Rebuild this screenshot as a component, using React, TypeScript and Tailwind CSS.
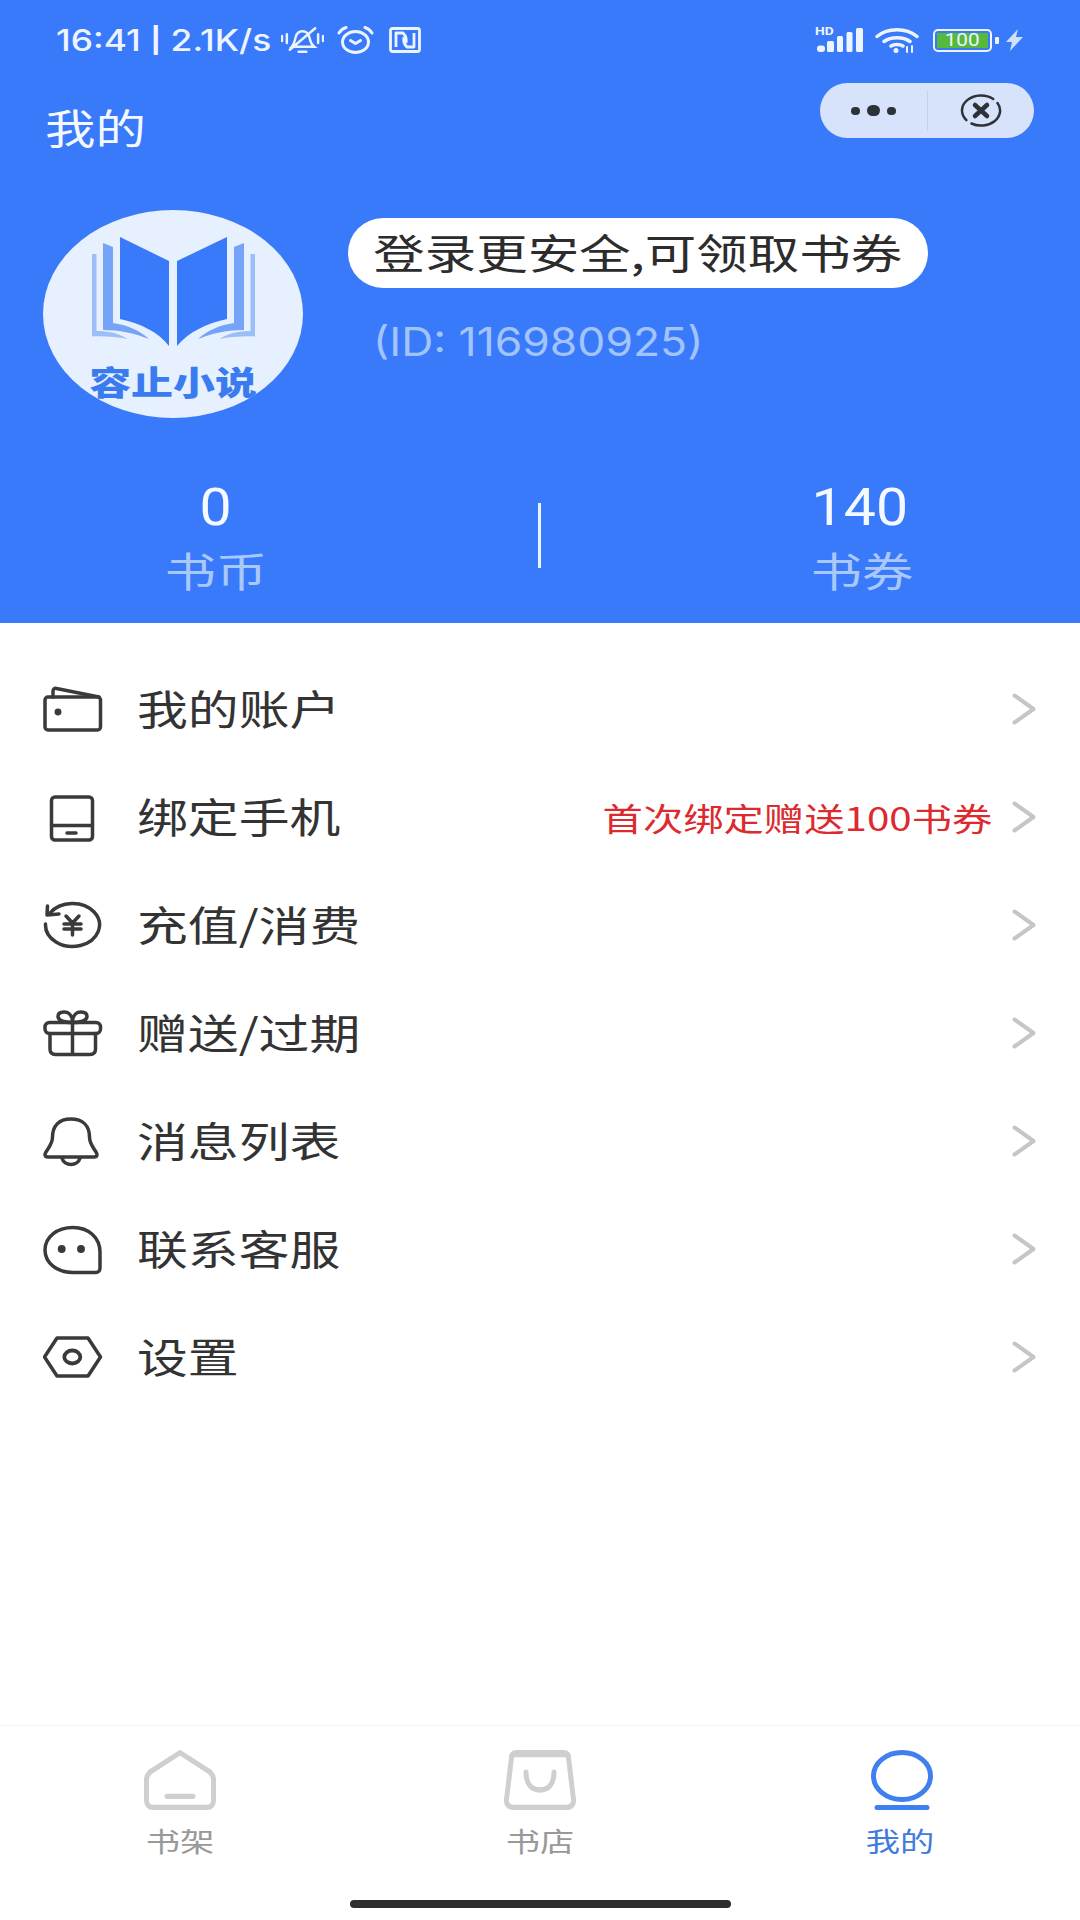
import React from "react";

const CJK = { fontFamily: '"Noto Sans CJK SC","Noto Sans",sans-serif' };
const LAT = { fontFamily: 'Roboto,"Noto Sans CJK SC",sans-serif' };
const INT = { fontFamily: 'Inter,"Noto Sans CJK SC",sans-serif' };

function Svg({ children }: { children: React.ReactNode }) {
  return (
    <svg viewBox="0 0 60 60" className="w-[60px] h-[60px]" fill="none" stroke="#3a3a3a" strokeWidth="3.5" strokeLinecap="round" strokeLinejoin="round">
      {children}
    </svg>
  );
}

const WalletIcon = () => (
  <Svg>
    <rect x="2" y="18" width="55.500" height="33" rx="3" />
    <path d="M10 18v-6c0-2 1.500-3 3.500-2.500L56 18" />
    <circle cx="15" cy="33" r="1.700" fill="#3a3a3a" />
  </Svg>
);
const TabletIcon = () => (
  <Svg>
    <rect x="8.500" y="10" width="41" height="43" rx="3.500" />
    <path d="M8.500 38.500h41M24 46h9" />
  </Svg>
);
const RechargeIcon = () => (
  <Svg>
    <path d="M2.500 29A27 21.500 0 1 0 7 18" />
    <path d="M4.500 11L4 20l12-1" />
    <path d="M23 21l6.500 7 6.500-7M21 29h17M21 34h17M29.500 28v12" strokeWidth="3.500" />
  </Svg>
);
const GiftIcon = () => (
  <Svg>
    <rect x="2" y="19.500" width="55.500" height="11" rx="4.500" />
    <path d="M7 30.500V46c0 3.500 2 5.500 5.500 5.500h34.500c3.500 0 5.500-2 5.500-5.500V30.500M29.500 19.500v32" />
    <path d="M29.500 19.500c-4 0-14 0-14.500-6 0-3 2.500-4.500 6-4.500 5 0 8.500 4 8.500 10.500 0-6.500 3.500-10.500 8.500-10.500 3.500 0 6 1.500 6 4.500-.5 6-10.500 6-14.500 6z" />
  </Svg>
);
const BellIcon = () => (
  <Svg>
    <path d="M27.700 8C16 8 9.500 15 9.500 26c0 9-7.500 14-7.500 17.500C2 45.500 3 46 5 46h46c2 0 3-.5 3-2.500C54 40 46.500 35 46.500 26c0-11-6.500-18-18.800-18z" />
    <path d="M19 47c1 4 5 6.500 9 6.500s8-2.500 9-6.500" />
  </Svg>
);
const ChatIcon = () => (
  <Svg>
    <path d="M2 31C2 18 14 8.500 30 8.500 46 8.500 57 19 57 33v16c0 3-2 4.500-4 4.500H30C14 53.500 2 44 2 31z" />
    <circle cx="18.700" cy="30" r="2.200" fill="#3a3a3a" />
    <circle cx="38" cy="30" r="2.200" fill="#3a3a3a" />
  </Svg>
);
const HexIcon = () => (
  <Svg>
    <path d="M14 11h31l12.500 19L45 49H14L1.500 30z" />
    <ellipse cx="29.300" cy="30" rx="8" ry="6.500" strokeWidth="3.800" />
  </Svg>
);

const Chevron = () => (
  <svg viewBox="0 0 24 32" className="w-[24px] h-[32px] ml-[20px] shrink-0" fill="none" stroke="#c6c6c6" strokeWidth="4" strokeLinecap="round" strokeLinejoin="round">
    <path d="M2.500 2.500L21.500 16 2.500 29.500" />
  </svg>
);

const rows: { label: string; Icon: () => React.ReactElement; note?: string }[] = [
  { label: "我的账户", Icon: WalletIcon },
  { label: "绑定手机", Icon: TabletIcon, note: "首次绑定赠送100书券" },
  { label: "充值/消费", Icon: RechargeIcon },
  { label: "赠送/过期", Icon: GiftIcon },
  { label: "消息列表", Icon: BellIcon },
  { label: "联系客服", Icon: ChatIcon },
  { label: "设置", Icon: HexIcon },
];

function StatusBar() {
  return (
    <div className="h-[78px] pt-[20px] pl-[56px] pr-[57px] flex items-start justify-between text-[#eef4ff]">
      <div className="flex items-center h-[40px]">
        <div className="w-[224px]">
          <span className="inline-block origin-left scale-x-[1.18] text-[30px] font-medium whitespace-nowrap" style={INT}>
            16:41 <span className="text-[25px] font-bold align-[2px]">|</span> 2.1K/s
          </span>
        </div>
        <svg viewBox="0 0 44 28" className="w-[43px] h-[28px] ml-[1px]" fill="none" stroke="#eef4ff" strokeWidth="2.500" strokeLinecap="round">
          <path d="M11 21c3-3 3-7 4-10 1-4 4-6 7-6s6 2 7 6c1 3 1 7 5 10zM18 26h8M38 8v9M43 10v5M6 8v9M1 10v5M9 24L35 2" />
        </svg>
        <svg viewBox="0 0 37 28" className="w-[37px] h-[28px] ml-[13px]" fill="none" stroke="#eef4ff" strokeWidth="3" strokeLinecap="round" strokeLinejoin="round">
          <ellipse cx="18.500" cy="16" rx="13" ry="10.500" />
          <path d="M13.500 14.500l5 3 5-3M2 7c2-3 4-4.500 7-5.500M35 7c-2-3-4-4.500-7-5.500" />
        </svg>
        <svg viewBox="0 0 32 26" className="w-[32px] h-[26px] ml-[15px]" fill="none" stroke="#eef4ff" strokeWidth="2.800" strokeLinejoin="round">
          <rect x="1.500" y="1.500" width="29" height="23" rx="2" />
          <path d="M7 20V6h7c3 3 4 6 3 10M25 6v14h-7c-3-3-4-6-3-10" />
        </svg>
      </div>
      <div className="flex items-center h-[40px]">
        <div className="relative w-[46px] h-[24px]">
          <span className="absolute left-[-2px] top-[-2px] text-[11px] font-bold leading-[12px] inline-block origin-left scale-x-[1.25]" style={LAT}>HD</span>
          <svg viewBox="0 0 46 24" className="w-[46px] h-[24px]" fill="#eef4ff">
            <rect x="0" y="17.500" width="8" height="6.500" rx="3" />
            <rect x="10" y="13" width="7" height="11" rx="1.500" />
            <rect x="20" y="8" width="6" height="16" rx="1.500" />
            <rect x="29.500" y="4" width="6" height="20" rx="1.500" />
            <rect x="39" y="0" width="7" height="24" rx="1.500" />
          </svg>
        </div>
        <svg viewBox="0 0 44 25" className="w-[44px] h-[25px] ml-[12px]" fill="none" stroke="#eef4ff" strokeWidth="3.500" strokeLinecap="round">
          <path d="M2 8.500C13 -.5 31 -.5 42 8.500M9 13.500c7-5 19-5 26 0M16 18c3-2 9-2 12 0" />
          <circle cx="21" cy="22.500" r="2.500" fill="#eef4ff" stroke="none" />
          <path d="M32 19v5M37 18v6" strokeWidth="2" />
        </svg>
        <div className="ml-[14px] w-[59px] h-[23px] rounded-[5px] border-[2px] border-[#eef4ff] p-[2px] flex">
          <div className="flex-1 bg-[#56b93e] rounded-[1px] flex items-center justify-center text-[18px] leading-none text-[#eef4ff]" style={LAT}>
            <span className="inline-block scale-x-[1.15]">100</span>
          </div>
        </div>
        <div className="ml-[3px] w-[4px] h-[7px] bg-[#eef4ff] rounded-[1px]" />
        <svg viewBox="0 0 17 22" className="w-[17px] h-[22px] ml-[7px]" fill="#cfe0fb">
          <path d="M12 0L0 13h6L4 22 17 8h-7z" />
        </svg>
      </div>
    </div>
  );
}

function Avatar() {
  return (
    <div className="relative w-[260px] h-[208px] rounded-[50%] bg-[#e6f0fe] shrink-0 overflow-hidden">
      <svg viewBox="0 0 260 208" className="absolute inset-0 w-full h-full">
        <path d="M49 44h4.500v77c11 0 22 2 31 8-10-2-23-3-35.500-2.500z" fill="#9cbef8" />
        <path d="M212 44h-4.500v77c-11 0-22 2-31 8 10-2 23-3 35.500-2.500z" fill="#9cbef8" />
        <path d="M60 33l10 4v76c14 2 26 7 36 16-15-6-30-9-46-9z" fill="#75a3f7" />
        <path d="M201 33l-10 4v76c-14 2-26 7-36 16 15-6 30-9 46-9z" fill="#75a3f7" />
        <path d="M77 27l49 24v85c-11-14-27-22-49-27z" fill="#397afb" />
        <path d="M184 27l-50 24v85c12-14 28-22 50-27z" fill="#397afb" />
      </svg>
      <div className="absolute left-0 right-0 top-[149px] text-center leading-[44px]" style={CJK}>
        <span className="inline-block scale-x-[1.27] text-[33px] font-black text-[#3a7bf0] whitespace-nowrap">容止小说</span>
      </div>
    </div>
  );
}

function Stat({ value, label, offset }: { value: string; label: string; offset: string }) {
  return (
    <>
      <div className={`flex justify-center leading-[60px] ${offset}`} style={LAT}>
        <span className="block scale-x-[1.1] text-[52px] text-[#f4f8ff]">{value}</span>
      </div>
      <div className="flex justify-center mt-[1px] leading-[60px]" style={CJK}>
        <span className="block scale-x-[1.25] text-[41px] text-[#a9c8fb]">{label}</span>
      </div>
    </>
  );
}

function Header() {
  return (
    <header className="h-[623px] bg-[#397afb] flex flex-col">
      <StatusBar />
      <div className="relative h-[132px] pl-[45px]">
        <div className="pt-[22px] text-[41px] leading-[52px] text-[#f4f8ff] inline-block origin-left scale-x-[1.23]" style={CJK}>我的</div>
        <div className="absolute left-[820px] top-[5px] w-[214px] h-[55px] rounded-full bg-[#d6e3fb] flex items-center">
          <div className="w-[107px] flex items-center justify-center gap-[7px]">
            <span className="w-[9px] h-[8px] rounded-full bg-[#2d3138]" />
            <span className="w-[13px] h-[11px] rounded-full bg-[#2d3138]" />
            <span className="w-[9px] h-[8px] rounded-full bg-[#2d3138]" />
          </div>
          <div className="w-px h-[40px] bg-[#c3d0e6]" />
          <div className="flex-1 flex justify-center">
            <svg viewBox="0 0 42 33" className="w-[42px] h-[33px]" fill="none" stroke="#2d3138" strokeLinecap="round">
              <path d="M6.400 26.100A19 15 0 0 1 33.200 5M37.500 9A19 15 0 0 1 11.500 29.500" strokeWidth="2.500" />
              <path d="M15 11l12 11M27 11L15 22" strokeWidth="4.500" />
            </svg>
          </div>
        </div>
      </div>
      <div className="flex pl-[43px]">
        <Avatar />
        <div className="ml-[45px] pt-[8px]">
          <div className="w-[580px] h-[70px] pb-[2px] rounded-full bg-white flex items-center justify-center" style={CJK}>
            <span className="inline-block scale-x-[1.255] text-[41px] text-[#2c2c2c] whitespace-nowrap">登录更安全,可领取书券</span>
          </div>
          <div className="mt-[30px] ml-[25px] text-[39px] leading-[48px] text-[#a2c4fb] inline-block origin-left scale-x-[1.14] whitespace-nowrap" style={INT}>(ID: 116980925)</div>
        </div>
      </div>
      <div className="mt-[60px] flex items-start">
        <div className="w-[432px] text-center">
          <Stat value="0" label="书币" offset="" />
        </div>
        <div className="ml-[106px] mt-[25px] w-[3px] h-[65px] bg-[#eef4ff]" />
        <div className="w-[539px] pl-[103px] text-center">
          <Stat value="140" label="书券" offset="pr-[4px]" />
        </div>
      </div>
    </header>
  );
}

function Row({ label, Icon, note }: { label: string; Icon: () => React.ReactElement; note?: string }) {
  return (
    <div className="h-[108px] flex items-center pl-[43px] pr-[44px]">
      <div className="w-[60px] h-[60px] shrink-0"><Icon /></div>
      <div className="ml-[34px] pb-[2px] text-[41px] text-[#333] whitespace-nowrap inline-block origin-left scale-x-[1.24]" style={CJK}>{label}</div>
      <div className="flex-1" />
      {note && <div className="text-[32px] text-[#dc2a2e] whitespace-nowrap inline-block origin-right scale-x-[1.26]" style={CJK}>{note}</div>}
      <Chevron />
    </div>
  );
}

function TabLabel({ text, color }: { text: string; color: string }) {
  return (
    <div className="mt-[12px] leading-[38px]" style={CJK}>
      <span className={`inline-block scale-x-[1.27] text-[27px] ${color}`}>{text}</span>
    </div>
  );
}

function TabBar() {
  return (
    <div className="absolute left-0 right-0 bottom-0 h-[195px] border-t border-[#f5f5f5] bg-white">
      <div className="flex h-[147px]">
        <div className="w-[360px] flex flex-col items-center pt-[24px]">
          <svg viewBox="0 0 72 57" preserveAspectRatio="none" className="w-[72px] h-[60px]" fill="none" stroke="#cfcfcf" strokeWidth="5" strokeLinejoin="round" strokeLinecap="round">
            <path d="M36 2.500l30 18.500c2 2 3.500 4 3.500 7v20c0 4-2.500 6.500-6.500 6.500H9c-4 0-6.500-2.500-6.500-6.500V28c0-3 1.500-5 3.500-7z" />
            <path d="M23 44h26" strokeWidth="5" />
          </svg>
          <TabLabel text="书架" color="text-[#999999]" />
        </div>
        <div className="w-[360px] flex flex-col items-center pt-[24px]">
          <svg viewBox="0 0 72 57" preserveAspectRatio="none" className="w-[72px] h-[60px]" fill="none" stroke="#cfcfcf" strokeWidth="5" strokeLinejoin="round" strokeLinecap="round">
            <path d="M12 2.500h48c3 0 4.500 2 4.500 4.500l5 40c.5 4-2 7.500-6.500 7.500H9c-4.500 0-7-3.500-6.500-7.500l5-40c0-2.500 1.500-4.500 4.500-4.500z" />
            <path d="M10 5h52" strokeWidth="4" />
            <path d="M22 21c0 12 6 17 14 17s14-5 14-17" />
          </svg>
          <TabLabel text="书店" color="text-[#999999]" />
        </div>
        <div className="w-[360px] flex flex-col items-center pt-[24px]">
          <svg viewBox="0 0 72 60" className="w-[72px] h-[60px] ml-[3px]" fill="none" stroke="#3f7fee" strokeWidth="5" strokeLinecap="round">
            <ellipse cx="36" cy="26" rx="28.500" ry="23.500" />
            <path d="M11 57.500h50" />
          </svg>
          <TabLabel text="我的" color="text-[#3f7cdc]" />
        </div>
      </div>
      <div className="mt-[27px] mx-auto w-[381px] h-[8px] rounded-full bg-[#2e2e2e]" />
    </div>
  );
}

export default function App() {
  return (
    <div className="relative w-[1080px] h-[1920px] bg-white overflow-hidden" style={CJK}>
      <Header />
      <div className="pt-[32px]">
        {rows.map((r) => (
          <Row key={r.label} {...r} />
        ))}
      </div>
      <TabBar />
    </div>
  );
}
